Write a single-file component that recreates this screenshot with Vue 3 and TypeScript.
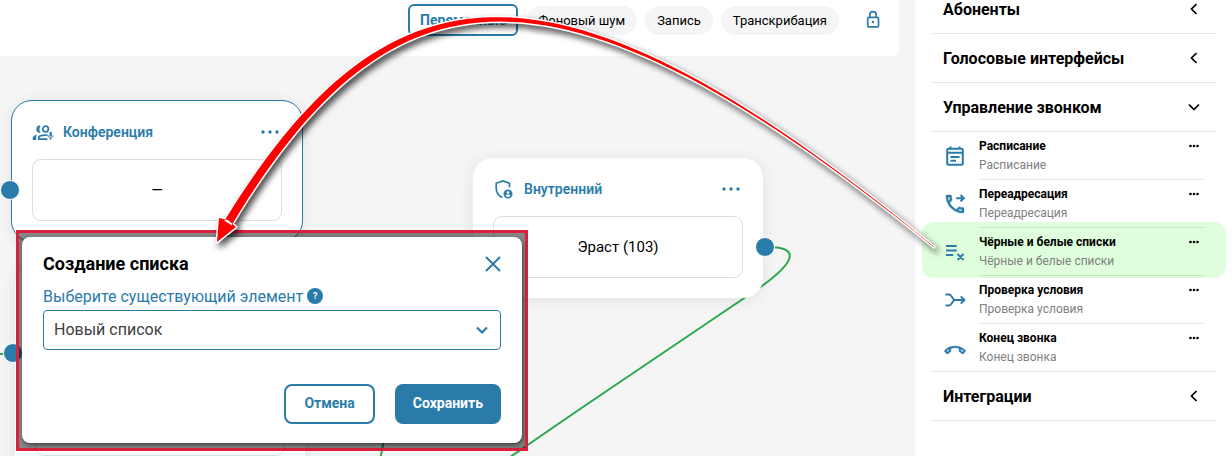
<script setup lang="ts">
import { ref } from 'vue'

interface Item {
  title: string
  icon: 'schedule' | 'forward' | 'lists' | 'condition' | 'hangup'
  active?: boolean
}
interface Section {
  title: string
  open: boolean
  items: Item[]
}

const sections = ref<Section[]>([
  { title: 'Абоненты', open: false, items: [] },
  { title: 'Голосовые интерфейсы', open: false, items: [] },
  {
    title: 'Управление звонком',
    open: true,
    items: [
      { title: 'Расписание', icon: 'schedule' },
      { title: 'Переадресация', icon: 'forward' },
      { title: 'Чёрные и белые списки', icon: 'lists', active: true },
      { title: 'Проверка условия', icon: 'condition' },
      { title: 'Конец звонка', icon: 'hangup' },
    ],
  },
  { title: 'Интеграции', open: false, items: [] },
])

const chips = ['Фоновый шум', 'Запись', 'Транскрибация']
const selected = ref('new')

const handset =
  'M6.54 5c.06.89.21 1.76.45 2.59l-1.2 1.2c-.41-1.2-.67-2.47-.76-3.79h1.51m9.86 12.02c.85.24 1.72.39 2.6.45v1.49c-1.32-.09-2.59-.35-3.8-.75l1.2-1.19M7.5 3H4c-.55 0-1 .45-1 1 0 9.39 7.61 17 17 17 .55 0 1-.45 1-1v-3.49c0-.55-.45-1-1-1-1.24 0-2.45-.2-3.57-.57-.1-.04-.21-.05-.31-.05-.26 0-.51.1-.71.29l-2.2 2.2c-2.83-1.45-5.15-3.76-6.59-6.59l2.2-2.2c.28-.28.36-.67.25-1.02C8.7 6.45 8.5 5.25 8.5 4c0-.55-.45-1-1-1z'

type Point = [number, number]

// Tapered curve: half-width grows from the tail to the arrow head.
function taperedArrow(p0: Point, p1: Point, p2: Point, p3: Point, tip: Point): string {
  const left: string[] = []
  const right: string[] = []
  const steps = 60
  for (let i = 0; i <= steps; i++) {
    const t = i / steps
    const u = 1 - t
    const at = (k: 0 | 1) =>
      u * u * u * p0[k] + 3 * u * u * t * p1[k] + 3 * u * t * t * p2[k] + t * t * t * p3[k]
    const slope = (k: 0 | 1) =>
      u * u * (p1[k] - p0[k]) + 2 * u * t * (p2[k] - p1[k]) + t * t * (p3[k] - p2[k])
    const dx = slope(0)
    const dy = slope(1)
    const len = Math.hypot(dx, dy)
    const half = 0.2 + 4 * t
    const nx = (-dy / len) * half
    const ny = (dx / len) * half
    left.push(`${(at(0) + nx).toFixed(1)} ${(at(1) + ny).toFixed(1)}`)
    right.unshift(`${(at(0) - nx).toFixed(1)} ${(at(1) - ny).toFixed(1)}`)
  }
  const body = `M${right.join(' L')} L${left.join(' L')}`
  return `${body} Z M${p3[0]} ${p3[1] - 3} L236 227 L${tip[0]} ${tip[1]} L219 218 Z`
}

const arrow = taperedArrow([934, 247], [558, -60], [391, -45], [228, 223], [217, 242])
</script>

<template>
  <div class="page">
    <main class="canvas">
      <svg class="links" aria-hidden="true">
        <path d="M764 247C802 246 795 262 762 286C746 297 740 301 728 309L580 409L500 464" />
        <path d="M386 430L380 460" />
        <path d="M0 354H6" />
      </svg>

      <header class="toolbar">
        <button class="variables" type="button">Переменные</button>
        <button v-for="chip in chips" :key="chip" class="chip" type="button">{{ chip }}</button>
        <button class="lock" type="button" aria-label="Заблокировать">
          <svg viewBox="0 0 24 24" class="line">
            <rect x="6.7" y="9.3" width="10.8" height="9.6" rx="1.2" />
            <path d="M8.800 9V6.800a3.200 3.200 0 0 1 6.400 0V9" />
            <circle cx="12" cy="14" r="1.2" class="solid" />
          </svg>
        </button>
      </header>

      <article class="node conference">
        <header class="node-head">
          <svg viewBox="0 0 24 24" class="line">
            <circle cx="14.6" cy="9" r="2.8" />
            <path d="M7.700 19.100V18c0-1.900 3-2.900 6.200-2.900 1.100 0 2 .1 2.800.4M7 19.100h9.400" />
            <path class="solid" d="M9.600 5.700C7 5 5.300 6.900 5.300 9.200s1.700 4.200 4.300 3.500C8 10.500 8 8 9.600 5.700zM5.600 14.800C3.200 15.200 1.700 16.400 1.700 18.200V20H5.200V18C5.200 16.800 5.300 15.800 5.600 14.800z" />
            <rect class="solid" x="18.500" y="11.800" width="2.400" height="4.800" rx="1.200" />
            <path class="thin" d="M17.200 15.300c.2 3.200 4.800 3.200 5 0M19.700 17.600v2.400" />
          </svg>
          <h3>Конференция</h3>
          <button type="button" class="more" aria-label="Действия">
            <svg viewBox="0 0 18 4"><circle cx="2" cy="2" r="1.700" /><circle cx="9" cy="2" r="1.700" /><circle cx="16" cy="2" r="1.700" /></svg>
          </button>
        </header>
        <div class="node-body">—</div>
        <span class="port in" />
      </article>

      <article class="node internal">
        <header class="node-head">
          <svg viewBox="0 0 24 24" class="line">
            <path d="M17.500 10.300V6.300L10.800 3.900 4.200 6.300V11c0 4.400 2.500 8 6.100 9.500" />
            <circle class="solid" cx="16" cy="17" r="4.500" />
            <circle class="hole" cx="16" cy="15.500" r="1.300" />
            <path class="hole" d="M13.500 18.800c.6-1.900 4.400-1.900 5 0-1.200 1.500-3.800 1.500-5 0z" />
          </svg>
          <h3>Внутренний</h3>
          <button type="button" class="more" aria-label="Действия">
            <svg viewBox="0 0 18 4"><circle cx="2" cy="2" r="1.700" /><circle cx="9" cy="2" r="1.700" /><circle cx="16" cy="2" r="1.700" /></svg>
          </button>
        </header>
        <div class="node-body">Эраст (103)</div>
        <span class="port out" />
      </article>

      <article class="node covered">
        <div class="node-body tall" />
        <span class="port in" />
      </article>
    </main>

    <aside class="sidebar">
      <section v-for="section in sections" :key="section.title" class="section">
        <h2>
          <button type="button" :aria-expanded="section.open" @click="section.open = !section.open">
            {{ section.title }}
            <svg viewBox="0 0 16 16">
              <path v-if="section.open" d="M3 5.500L8 10.500L13 5.500" />
              <path v-else d="M10.500 3L5.500 8L10.500 13" />
            </svg>
          </button>
        </h2>
        <ul v-if="section.open">
          <li v-for="item in section.items" :key="item.title" :class="{ active: item.active }">
            <svg viewBox="0 0 24 24" class="line item-icon">
              <template v-if="item.icon === 'schedule'">
                <rect x="4.200" y="4.700" width="15.600" height="16" rx="1.500" />
                <path d="M4.200 8.800h15.600M7.500 2.600v2.500M16.500 2.600v2.500M7.500 13h9M7.500 16.700h5.500" />
              </template>
              <template v-else-if="item.icon === 'forward'">
                <path class="solid" :d="handset" />
                <path d="M13.200 6.200h7.300M17.600 3l3.200 3.200-3.200 3.200" />
              </template>
              <template v-else-if="item.icon === 'lists'">
                <path d="M3 6h10.700M3 10.500h10.700M3 15h7.200M14.500 14l6 6M20.500 14l-6 6" />
              </template>
              <template v-else-if="item.icon === 'condition'">
                <path d="M2.500 6.500h3.300q1.300 0 2 1L11.200 12l-3.400 4.500q-.7 1-2 1H2.500M11.200 12h10M17.800 8.400l3.600 3.600-3.600 3.600" />
              </template>
              <template v-else>
                <path class="solid" transform="translate(12 15) rotate(135) scale(.87) translate(-12 -12)" :d="handset" />
              </template>
            </svg>
            <div class="item-text">
              <strong>{{ item.title }}</strong>
              <span>{{ item.title }}</span>
              <button type="button" class="more small" aria-label="Действия">
                <svg viewBox="0 0 10 4"><circle cx="1.500" cy="2" r="1.300" /><circle cx="5" cy="2" r="1.300" /><circle cx="8.500" cy="2" r="1.300" /></svg>
              </button>
            </div>
          </li>
        </ul>
      </section>
    </aside>

    <div class="frame">
      <form class="dialog" role="dialog" aria-labelledby="dialog-title" @submit.prevent>
        <header>
          <h1 id="dialog-title">Создание списка</h1>
          <button type="button" class="close" aria-label="Закрыть">
            <svg viewBox="0 0 16 16"><path d="M1 1L15 15M15 1L1 15" /></svg>
          </button>
        </header>
        <div class="label-row">
          <label for="list">Выберите существующий элемент</label>
          <button type="button" class="help" aria-label="Справка">?</button>
        </div>
        <div class="select">
          <select id="list" v-model="selected">
            <option value="new">Новый список</option>
          </select>
          <svg viewBox="0 0 16 16"><path d="M3 5.500L8 10.500L13 5.500" /></svg>
        </div>
        <footer>
          <button type="button" class="btn ghost">Отмена</button>
          <button type="submit" class="btn">Сохранить</button>
        </footer>
      </form>
    </div>

    <svg class="pointer" aria-hidden="true">
      <path class="pointer-edge" :d="arrow" />
      <path class="pointer-fill" :d="arrow" />
    </svg>
  </div>
</template>

<style>
body {
  margin: 0;
}
</style>

<style scoped>
* {
  box-sizing: border-box;
}
.page {
  --blue: #2a7ba9;
  position: relative;
  display: flex;
  min-height: 100vh;
  overflow: hidden;
  background: #f5f5f5;
  color: #000;
  font-family: Roboto, 'Liberation Sans', sans-serif;
}
button {
  margin: 0;
  padding: 0;
  border: 0;
  background: none;
  color: inherit;
  font: inherit;
  cursor: pointer;
}
h1,
h2,
h3,
ul {
  margin: 0;
  padding: 0;
}
svg {
  display: block;
  fill: none;
}
.line {
  flex: none;
  width: 24px;
  height: 24px;
  stroke: var(--blue);
  stroke-width: 1.7;
}
.item-icon {
  stroke-width: 2;
}
.line .solid {
  fill: var(--blue);
  stroke: none;
}
.item-icon .solid {
  stroke: var(--blue);
  stroke-width: 0.4;
}
.line .hole {
  fill: #fff;
  stroke: none;
}
.line .thin {
  stroke-width: 1;
}

.canvas {
  flex: 1;
  min-width: 0;
}
.toolbar {
  display: flex;
  align-items: center;
  justify-content: flex-end;
  gap: 8px;
  height: 56px;
  margin-right: 16px;
  padding: 0 14px 16px 0;
  border-radius: 0 0 8px 0;
  background: #fff;
}
.variables {
  height: 32px;
  padding: 0 10px;
  border: 2px solid var(--blue);
  border-radius: 6px;
  color: var(--blue);
  font-size: 14px;
  font-weight: 700;
}
.chip {
  height: 29px;
  padding: 0 12px;
  border-radius: 15px;
  background: #f5f5f5;
  font-size: 13px;
}
.lock {
  margin-left: 14px;
}

.links {
  position: absolute;
  inset: 0;
  width: 100%;
  height: 100%;
  stroke: #2ba84a;
  stroke-width: 2;
  pointer-events: none;
}
.node {
  position: absolute;
  width: 290px;
  padding: 20px;
  border-radius: 20px;
  background: #fff;
  box-shadow: 0 2px 16px rgba(0, 0, 0, 0.09);
}
.conference {
  left: 12px;
  top: 101px;
  outline: 1px solid var(--blue);
}
.internal {
  left: 473px;
  top: 158px;
}
.covered {
  left: 15px;
  top: 264px;
}
.node-head {
  display: flex;
  align-items: center;
  gap: 8px;
  height: 22px;
  margin: 0 0 16px -1px;
}
.node-head h3 {
  flex: 1;
  color: var(--blue);
  font-size: 14px;
  font-weight: 600;
}
.node-body {
  display: grid;
  place-items: center;
  height: 62px;
  border: 1px solid #dedede;
  border-radius: 9px;
  font-size: 15px;
}
.node-body.tall {
  height: 172px;
}
.node .more {
  margin-right: 3px;
}
.port {
  position: absolute;
  top: 79px;
  width: 20px;
  height: 20px;
  border: 1px solid #fff;
  border-radius: 50%;
  background: var(--blue);
}
.port.in {
  left: -12px;
}
.port.out {
  right: -12px;
}
.more svg {
  width: 18px;
  height: 4px;
  fill: var(--blue);
}
.more.small svg {
  width: 10px;
  fill: #000;
}

.sidebar {
  isolation: isolate;
  flex: none;
  width: 317px;
  margin-top: -15px;
  padding: 0 16px;
  background: #fff;
}
.section {
  border-bottom: 1px solid #e6e6e6;
}
.section h2 {
  font-size: 16px;
  font-weight: 700;
}
.section h2 button {
  display: flex;
  align-items: center;
  justify-content: space-between;
  width: 100%;
  height: 48px;
  padding: 0 14px 0 12px;
}
.section h2 svg {
  width: 16px;
  height: 16px;
  stroke: #000;
  stroke-width: 1.7;
}
.section ul {
  border-top: 1px solid #e6e6e6;
  list-style: none;
}
.section li {
  position: relative;
  display: flex;
  align-items: center;
  gap: 12px;
  height: 48px;
  padding: 0 12px;
}
.section li:last-child {
  height: 47px;
}
.section li.active::before {
  content: '';
  position: absolute;
  z-index: -1;
  inset: -6px -10px -2px -9px;
  border-radius: 12px;
  background: #dfffdc;
}
.item-text {
  display: grid;
  grid-template-columns: 1fr auto;
  align-content: center;
  align-items: center;
  flex: 1;
  height: 100%;
  border-bottom: 1px solid rgba(0, 0, 0, 0.1);
  font-size: 12px;
  line-height: 19px;
}
.section li:last-child .item-text {
  border-bottom: 0;
}
.item-text span {
  grid-row: 2;
  color: #808080;
}
.item-text .more {
  margin-right: 5px;
}

.frame {
  position: absolute;
  left: 16px;
  top: 230px;
  width: 512px;
  padding: 4px 3px 5px;
  border: 3px solid #d9213f;
  background: rgba(0, 0, 0, 0.48);
}
.dialog {
  padding: 15px 21px 19px;
  border-radius: 8px;
  background: #fff;
  box-shadow: 1px 2px 4px rgba(0, 0, 0, 0.5);
}
.dialog header {
  display: flex;
  align-items: center;
  justify-content: space-between;
  height: 24px;
}
.dialog h1 {
  padding-bottom: 2px;
  font-size: 18px;
  font-weight: 700;
}
.close svg {
  width: 16px;
  height: 16px;
  stroke: var(--blue);
  stroke-width: 2;
}
.label-row {
  display: flex;
  align-items: center;
  gap: 4px;
  height: 24px;
  margin: 8px 0 2px;
  color: var(--blue);
  font-size: 16px;
}
.help {
  width: 16px;
  height: 16px;
  border-radius: 50%;
  background: var(--blue);
  color: #fff;
  font-size: 9px;
  font-weight: 700;
}
.select {
  position: relative;
}
.select select {
  display: block;
  width: 100%;
  height: 40px;
  padding: 0 10px 2px;
  border: 1px solid var(--blue);
  border-radius: 4px;
  appearance: none;
  background: #fff;
  color: #404040;
  font: 16px Roboto, 'Liberation Sans', sans-serif;
}
.select svg {
  position: absolute;
  right: 11px;
  top: 12px;
  width: 16px;
  height: 16px;
  stroke: var(--blue);
  stroke-width: 2.2;
  pointer-events: none;
}
.dialog footer {
  display: flex;
  justify-content: flex-end;
  gap: 20px;
  margin-top: 34px;
}
.btn {
  height: 40px;
  padding: 0 16px 2px;
  border: 2px solid var(--blue);
  border-radius: 8px;
  background: var(--blue);
  color: #fff;
  font-size: 14px;
  font-weight: 700;
}
.btn.ghost {
  padding: 0 18px 2px;
  background: #fff;
  color: var(--blue);
}

.pointer {
  position: absolute;
  inset: 0;
  width: 100%;
  height: 100%;
  pointer-events: none;
  filter: drop-shadow(3px 4px 3px rgba(0, 0, 0, 0.7));
}
.pointer-edge {
  stroke: #fff;
  stroke-width: 3;
  stroke-linejoin: round;
}
.pointer-fill {
  fill: #f00;
}
</style>
